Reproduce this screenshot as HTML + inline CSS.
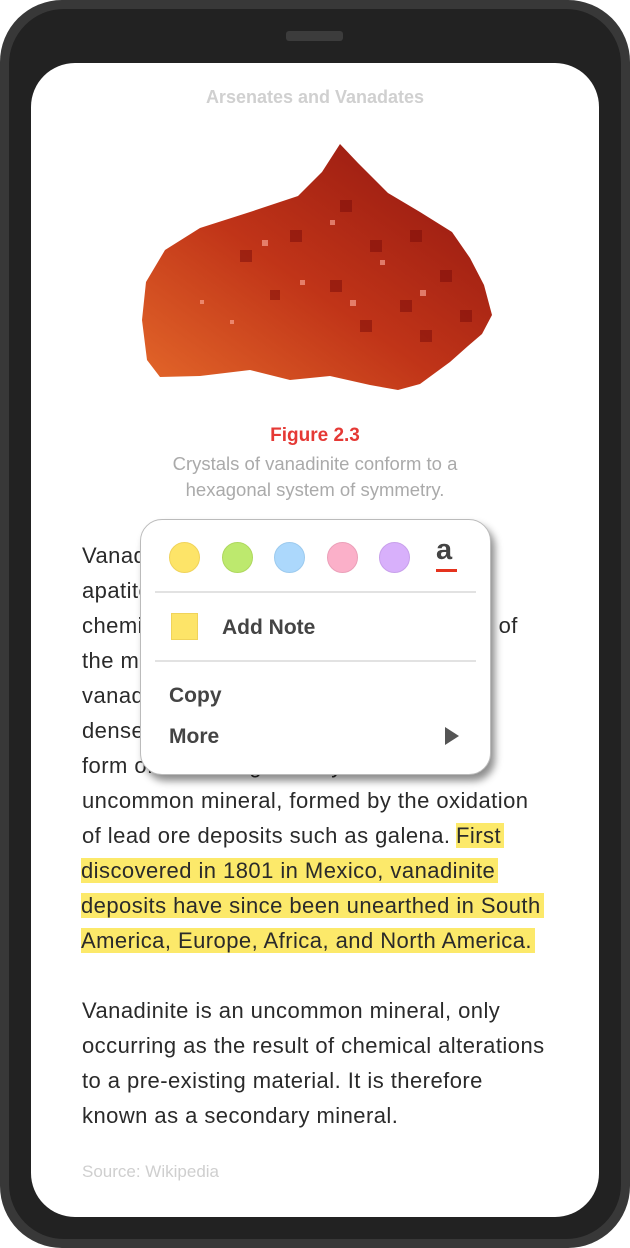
<!DOCTYPE html>
<html><head><meta charset="utf-8"><style>
html,body{margin:0;padding:0;width:630px;height:1248px;background:#fff;overflow:hidden;font-family:"Liberation Sans",sans-serif}
.phone{position:absolute;left:0;top:0;width:630px;height:1248px;background:#383838;border-radius:62px}
.inner{position:absolute;left:9px;top:9px;width:612px;height:1230px;background:#222;border-radius:55px}
.spk{position:absolute;left:286px;top:31px;width:57px;height:10px;border-radius:3px;background:#3c3c3c}
.screen{position:absolute;left:31px;top:63px;width:568px;height:1154px;background:#fff;border-radius:44px;overflow:hidden}
.t{position:absolute;white-space:nowrap}
.ln{position:absolute;left:51px;font-size:22px;color:#2a2a2a;line-height:35px;white-space:nowrap;letter-spacing:0.45px}
.hl{background:#fce96a;padding:0 3px 0 0;margin-left:-1px}
.menu{position:absolute;left:109px;top:456px;width:349px;height:254px;background:#fff;border-radius:22px;border:1px solid #bbb;box-shadow:4px 6px 8px rgba(0,0,0,.45)}
.dot{position:absolute;top:22px;width:29px;height:29px;border-radius:50%}
.sep{position:absolute;left:14px;width:321px;height:2px;background:#e2e2e2}
.mi{position:absolute;font-size:20px;color:#444;font-weight:bold;white-space:nowrap}
</style></head><body>
<div class="phone"><div class="inner"></div><div class="spk"></div>
<div class="screen">
<div class="t" style="left:0;width:568px;top:24px;text-align:center;font-size:18px;font-weight:bold;color:#d0d0d0">Arsenates and Vanadates</div>
<svg style="position:absolute;left:0;top:0" width="568" height="400" viewBox="31 63 568 400">
<defs><linearGradient id="g" x1="0" y1="1" x2="1" y2="0"><stop offset="0" stop-color="#e4682a"/><stop offset=".45" stop-color="#c03418"/><stop offset="1" stop-color="#8e1410"/></linearGradient></defs>
<path fill="url(#g)" d="M340,144 L358,163 L388,193 L420,212 L452,232 L470,258 L484,285 L492,315 L482,334 L468,346 L450,362 L420,384 L398,390 L370,385 L330,376 L290,380 L250,370 L200,376 L160,377 L147,360 L142,320 L146,282 L165,250 L200,228 L250,212 L298,196 L322,172 Z"/>
<g fill="#7a0c0a" opacity=".5"><rect x="240" y="250" width="12" height="12"/><rect x="290" y="230" width="12" height="12"/><rect x="340" y="200" width="12" height="12"/><rect x="370" y="240" width="12" height="12"/><rect x="410" y="230" width="12" height="12"/><rect x="440" y="270" width="12" height="12"/><rect x="400" y="300" width="12" height="12"/><rect x="330" y="280" width="12" height="12"/><rect x="360" y="320" width="12" height="12"/><rect x="420" y="330" width="12" height="12"/><rect x="270" y="290" width="10" height="10"/><rect x="460" y="310" width="12" height="12"/></g>
<g fill="#ffb0a0" opacity=".6"><rect x="262" y="240" width="6" height="6"/><rect x="300" y="280" width="5" height="5"/><rect x="350" y="300" width="6" height="6"/><rect x="380" y="260" width="5" height="5"/><rect x="420" y="290" width="6" height="6"/><rect x="330" y="220" width="5" height="5"/><rect x="230" y="320" width="4" height="4"/><rect x="200" y="300" width="4" height="4"/></g>
</svg>
<div class="t" style="left:0;width:568px;top:362px;text-align:center;font-size:19px;font-weight:bold;color:#e53935">Figure 2.3</div>
<div class="t" style="left:0;width:568px;top:388px;text-align:center;font-size:18.5px;color:#aaa;line-height:26px">Crystals of vanadinite conform to a<br>hexagonal system of symmetry.</div>
<div class="ln" style="top:475px">Vanadinite is a mineral belonging to the</div>
<div class="ln" style="top:510px">apatite group of phosphates, with the</div>
<div class="ln" style="top:545px">chemical formula Pb5(VO4)3Cl. It is one of</div>
<div class="ln" style="top:580px">the main industrial ores of the metal</div>
<div class="ln" style="top:615px">vanadium and a minor source of lead. A</div>
<div class="ln" style="top:650px">dense, brittle mineral, it is usually in the</div>
<div class="ln" style="top:685px">form of red hexagonal crystals. It is an</div>
<div class="ln" style="top:720px">uncommon mineral, formed by the oxidation</div>
<div class="ln" style="top:755px">of lead ore deposits such as galena. <span class="hl">First</span></div>
<div class="ln" style="top:790px"><span class="hl">discovered in 1801 in Mexico, vanadinite</span></div>
<div class="ln" style="top:825px"><span class="hl">deposits have since been unearthed in South</span></div>
<div class="ln" style="top:860px"><span class="hl">America, Europe, Africa, and North America.</span></div>
<div class="ln" style="top:930px">Vanadinite is an uncommon mineral, only</div>
<div class="ln" style="top:965px">occurring as the result of chemical alterations</div>
<div class="ln" style="top:1000px">to a pre-existing material. It is therefore</div>
<div class="ln" style="top:1035px">known as a secondary mineral.</div>
<div class="t" style="left:51px;top:1099px;font-size:17px;color:#cfcfcf">Source: Wikipedia</div>
<div class="menu">
<div class="dot" style="left:28px;background:#fde468;border:1px solid #f0d35a"></div>
<div class="dot" style="left:81px;background:#bde96e;border:1px solid #aed85e"></div>
<div class="dot" style="left:133px;background:#acd8fc;border:1px solid #9ccaee"></div>
<div class="dot" style="left:186px;background:#fbb0c9;border:1px solid #eba0b9"></div>
<div class="dot" style="left:238px;background:#d8b0fb;border:1px solid #c8a0eb"></div>
<div class="t" style="left:295px;top:14px;font-size:29px;color:#444;font-weight:bold">a</div>
<div style="position:absolute;left:295px;top:49px;width:21px;height:3px;background:#e5331e"></div>
<div class="sep" style="top:71px"></div>
<div style="position:absolute;left:30px;top:93px;width:25px;height:25px;background:#fde468;border:1px solid #f0d35a"></div>
<div class="mi" style="left:81px;top:96px;font-size:21px">Add Note</div>
<div class="sep" style="top:140px"></div>
<div class="mi" style="left:28px;top:164px;font-size:21px">Copy</div>
<div class="mi" style="left:28px;top:205px;font-size:21px">More</div>
<div style="position:absolute;left:304px;top:207px;width:0;height:0;border-left:14px solid #555;border-top:9px solid transparent;border-bottom:9px solid transparent"></div>
</div>
</div></div>
</body></html>
